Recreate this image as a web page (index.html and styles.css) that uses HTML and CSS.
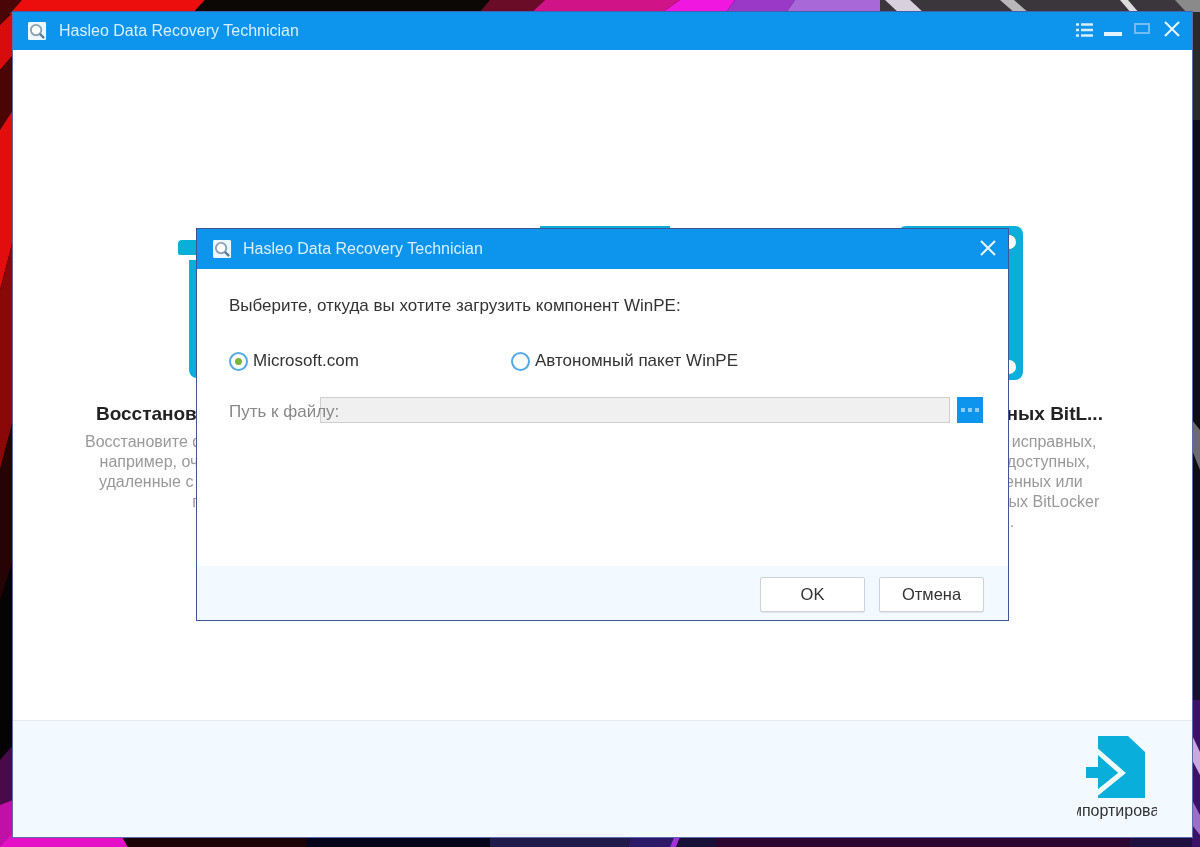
FILE: index.html
```html
<!DOCTYPE html>
<html lang="ru">
<head>
<meta charset="utf-8">
<title>Hasleo Data Recovery Technician</title>
<link rel="stylesheet" href="styles.css">
</head>
<body>
<svg class="wallpaper" viewBox="0 0 1200 847" preserveAspectRatio="none" aria-hidden="true">
  <rect width="1200" height="847" fill="#060304"/>
  <!-- top edge -->
  <polygon points="0,0 205,0 192,14 0,14" fill="#ec0d0d"/>
  <polygon points="0,0 22,0 0,25" fill="#4a0606"/>
  <polygon points="205,0 490,0 480,14 192,14" fill="#0c0805"/>
  <polygon points="490,0 545,0 530,14 478,14" fill="#6a0c28"/>
  <polygon points="545,0 680,0 660,14 530,14" fill="#d01488"/>
  <polygon points="680,0 735,0 725,14 660,14" fill="#f018e0"/>
  <polygon points="735,0 795,0 785,14 725,14" fill="#9a38c8"/>
  <polygon points="795,0 880,0 880,14 785,14" fill="#a868d8"/>
  <polygon points="880,0 1200,0 1200,14 880,14" fill="#3a363c"/>
  <polygon points="885,0 910,0 925,14 900,14" fill="#d8d0dc"/>
  <polygon points="1000,0 1014,0 1030,14 1016,14" fill="#b8b8b8"/>
  <polygon points="1120,0 1128,0 1140,14 1132,14" fill="#dddddd"/>
  <polygon points="1175,0 1200,0 1200,14 1188,14" fill="#8a8a8a"/>
  <!-- left edge -->
  <polygon points="0,25 13,12 13,55 0,70" fill="#d80c0c"/>
  <polygon points="0,70 13,55 13,110 0,130" fill="#4c0505"/>
  <polygon points="0,130 13,110 13,240 0,290" fill="#e20e0e"/>
  <polygon points="0,290 13,240 13,420 0,470" fill="#8a0808"/>
  <polygon points="0,470 13,420 13,560 0,600" fill="#260305"/>
  <polygon points="0,760 13,745 13,847 0,847" fill="#4a0a48"/>
  <polygon points="0,805 13,800 13,847 0,847" fill="#c010a8"/>
  <!-- bottom edge -->
  <polygon points="13,833 120,833 128,847 0,847" fill="#e60fc8"/>
  <polygon points="120,833 306,833 306,847 128,847" fill="#1c0306"/>
  <polygon points="306,833 490,833 490,847 306,847" fill="#05041a"/>
  <polygon points="490,833 632,833 628,847 490,847" fill="#201a4a"/>
  <polygon points="632,833 680,833 672,847 628,847" fill="#2c1a68"/>
  <polygon points="676,833 682,833 676,847 670,847" fill="#a030e0"/>
  <polygon points="682,833 716,833 716,847 676,847" fill="#181038"/>
  <polygon points="716,833 1130,833 1130,847 716,847" fill="#2c0530"/>
  <polygon points="1130,833 1200,833 1200,847 1130,847" fill="#201040"/>
  <!-- right edge -->
  <polygon points="1192,12 1200,12 1200,120 1192,120" fill="#2a2a2a"/>
  <polygon points="1192,120 1200,120 1200,560 1192,560" fill="#0e0e10"/>
  <polygon points="1192,420 1200,430 1200,470 1192,450" fill="#6a6a70"/>
  <polygon points="1192,560 1200,560 1200,700 1192,700" fill="#1a0f2c"/>
  <polygon points="1192,700 1200,700 1200,847 1192,847" fill="#3c1268"/>
  <polygon points="1192,735 1200,752 1200,775 1192,760" fill="#c9a9e0"/>
  <polygon points="1192,800 1200,815 1200,835 1192,825" fill="#9a70c8"/>
</svg>

<section class="window main-window">
  <header class="titlebar">
    <svg class="app-icon" viewBox="0 0 20 20" aria-hidden="true">
      <rect width="19" height="19" rx="1.5" fill="#eef7fd"/>
      <circle cx="8.5" cy="8.5" r="5.5" fill="#fff" stroke="#8ba3b3" stroke-width="2"/>
      <path d="M12.5 12.5 L17 17" stroke="#5f7c8f" stroke-width="2.4"/>
    </svg>
    <span class="title">Hasleo Data Recovery Technician</span>
    <div class="controls">
      <svg class="ctl ctl-menu" viewBox="0 0 17 14" aria-hidden="true">
        <path d="M0 1.5h3M5 1.5h12M0 7h3M5 7h12M0 12.5h3M5 12.5h12" stroke="#d5edfd" stroke-width="2.4"/>
      </svg>
      <svg class="ctl ctl-min" viewBox="0 0 18 14" aria-hidden="true">
        <path d="M0 10h18" stroke="#e3f3fe" stroke-width="4"/>
      </svg>
      <svg class="ctl ctl-max" viewBox="0 0 16 11" aria-hidden="true">
        <rect x="1" y="1" width="14" height="9" fill="none" stroke="#74bdf3" stroke-width="2"/>
      </svg>
      <svg class="ctl ctl-close" viewBox="0 0 16 16" aria-hidden="true">
        <path d="M1 1L15 15M15 1L1 15" stroke="#e9f5fe" stroke-width="2"/>
      </svg>
    </div>
  </header>

  <main class="features">
    <article class="feature">
      <div class="art-left">
        <div class="art-tab"></div>
        <div class="art-sheet"></div>
      </div>
      <h2>Восстановление фото</h2>
      <p>Восстановите файлы после сбоя,<br>например, очистив корзину<br>удаленные с&nbsp; дисков и карт<br>по</p>
    </article>
    <article class="feature">
      <div class="art-mid"></div>
    </article>
    <article class="feature">
      <div class="art-right">
        <span class="notch notch-top"></span>
        <span class="notch notch-bottom"></span>
      </div>
      <h2>Тома данных BitL...</h2>
      <p>Данные на исправных,<br>дисков недоступных,<br>поврежденных или<br>не удаленных BitLocker<br>.</p>
    </article>
  </main>

  <footer class="main-footer">
    <div class="import">
      <svg class="import-icon" viewBox="0 0 59 63" aria-hidden="true">
        <path d="M12 0H42L59 16V62H12Z" fill="#0aaedb"/>
        <path d="M10 14L36 37L10 58" fill="none" stroke="#f3fafe" stroke-width="5"/>
        <rect x="0" y="12" width="12" height="48" fill="#f3faff"/>
        <rect x="0" y="31" width="13" height="11" fill="#0aaedb"/>
      </svg>
      <span class="import-label"><span class="import-text">Импортировать</span></span>
    </div>
  </footer>
</section>

<section class="window dialog">
  <header class="titlebar dialog-bar">
    <svg class="app-icon" viewBox="0 0 20 20" aria-hidden="true">
      <rect width="19" height="19" rx="1.5" fill="#eef7fd"/>
      <circle cx="8.5" cy="8.5" r="5.5" fill="#fff" stroke="#8ba3b3" stroke-width="2"/>
      <path d="M12.5 12.5 L17 17" stroke="#5f7c8f" stroke-width="2.4"/>
    </svg>
    <span class="title">Hasleo Data Recovery Technician</span>
    <svg class="ctl dialog-close" viewBox="0 0 16 16" aria-hidden="true">
      <path d="M1 1L15 15M15 1L1 15" stroke="#e9f5fe" stroke-width="2"/>
    </svg>
  </header>
  <div class="dialog-body">
    <p class="prompt">Выберите, откуда вы хотите загрузить компонент WinPE:</p>
    <div class="radios">
      <label class="radio radio-ms"><span class="dot dot-on"></span>Microsoft.com</label>
      <label class="radio"><span class="dot"></span>Автономный пакет WinPE</label>
    </div>
    <div class="path-row">
      <span class="path-label">Путь к файлу:</span>
      <div class="path-input"></div>
      <div class="browse"><i></i><i></i><i></i></div>
    </div>
  </div>
  <footer class="dialog-footer">
    <button class="btn">OK</button>
    <button class="btn">Отмена</button>
  </footer>
</section>
</body>
</html>
```
FILE: styles.css
```css
* { box-sizing: border-box; }
html, body { margin: 0; height: 847px; overflow: hidden; }
body {
  position: relative;
  width: 1200px;
  font-family: "Liberation Sans", Arial, sans-serif;
  font-size: 16px;
  padding: 11px 7px 9px 12px;
}
.wallpaper { position: absolute; inset: 0; width: 1200px; height: 847px; }

.window { filter: blur(0.45px); }
.main-window {
  position: relative;
  height: 827px;
  background: #fff;
  border: 1px solid #5d6ba8;
  border-top-color: #3f62b0;
  display: flex;
  flex-direction: column;
}
.titlebar {
  display: flex;
  align-items: center;
  flex: none;
  height: 38px;
  background: #0d95ee;
  padding-left: 15px;
  color: #d9effd;
}
.app-icon { width: 19px; height: 19px; flex: none; }
.title { margin-left: 12px; font-size: 16px; }
.controls {
  margin-left: auto;
  display: flex;
  align-items: center;
  padding-right: 12px;
}
.ctl { display: block; flex: none; }
.ctl-menu { width: 17px; height: 14px; margin-right: 11px; margin-bottom: 2px; }
.ctl-min { width: 18px; height: 14px; margin-right: 12px; }
.ctl-max { width: 16px; height: 11px; margin-right: 14px; margin-bottom: 6px; }
.ctl-close { width: 16px; height: 16px; margin-bottom: 4px; }

.features {
  flex: 1;
  display: grid;
  grid-template-columns: 232px 232px 232px;
  justify-content: space-between;
  padding: 176px 64px 0 72px;
}
.feature { text-align: center; }
.feature h2 {
  margin: 0;
  font-size: 19px;
  line-height: 24px;
  font-weight: 700;
  color: #222;
  white-space: nowrap;
}
.feature p {
  margin: 6px 0 0;
  font-size: 16px;
  line-height: 20px;
  color: #999;
  white-space: nowrap;
}
.art-left { margin: 14px 0 24px 93px; }
.art-tab {
  width: 60px;
  height: 15px;
  background: #0aaedb;
  border-radius: 4px 0 0 2px;
}
.art-sheet {
  width: 120px;
  height: 118px;
  margin: 5px 0 0 11px;
  background: #0aaedb;
  border-radius: 0 0 0 8px;
}
.art-mid { width: 130px; height: 100px; margin: 0 0 0 49px; background: #0aaedb; }
.art-right {
  position: relative;
  width: 125px;
  height: 154px;
  margin: 0 0 22px 2px;
  background: #0aaedb;
  border-radius: 8px;
}
.notch {
  position: absolute;
  left: 104px;
  width: 14px;
  height: 14px;
  border-radius: 50%;
  background: #fff;
}
.notch-top { top: 9px; }
.notch-bottom { top: 134px; }

.main-footer {
  flex: none;
  height: 117px;
  background: #f3faff;
  border-top: 1px solid #e6e9ee;
  display: flex;
  justify-content: flex-end;
  padding: 15px 35px 0 0;
}
.import { width: 80px; display: flex; flex-direction: column; align-items: center; }
.import-icon { width: 59px; height: 63px; margin-left: -3px; }
.import-label {
  width: 80px;
  margin-top: 3px;
  overflow: hidden;
  display: flex;
  justify-content: center;
  line-height: 18px;
  font-size: 16px;
  color: #333;
}
.import-text { flex: none; }

.dialog {
  position: absolute;
  left: 196px;
  top: 228px;
  width: 813px;
  height: 393px;
  background: #fff;
  border: 1px solid #3f5596;
  display: flex;
  flex-direction: column;
}
.dialog-bar { height: 40px; padding-left: 16px; }
.dialog-bar .title { margin-left: 11px; }
.dialog-close { margin-left: auto; margin-right: 12px; width: 16px; height: 16px; margin-bottom: 2px; }
.dialog-body { flex: 1; padding: 27px 25px 0 32px; }
.prompt { margin: 0; font-size: 17px; line-height: 20px; color: #333; }
.radios { display: flex; margin-top: 34px; height: 22px; align-items: center; }
.radio { display: flex; align-items: center; font-size: 17px; color: #333; }
.radio-ms { width: 282px; }
.dot {
  width: 19px;
  height: 19px;
  margin-right: 5px;
  border-radius: 50%;
  border: 2px solid #55a9e4;
  background: #fff;
  flex: none;
  display: flex;
  align-items: center;
  justify-content: center;
}
.dot-on::after {
  content: "";
  width: 7px;
  height: 7px;
  border-radius: 50%;
  background: #7db53a;
}
.path-row { display: flex; align-items: center; margin-top: 25px; height: 26px; }
.path-label {
  width: 91px;
  flex: none;
  position: relative;
  z-index: 1;
  padding-top: 3px;
  color: #888;
  font-size: 17px;
  white-space: nowrap;
}
.path-input {
  width: 630px;
  height: 26px;
  flex: none;
  background: #f0f0f0;
  border: 1px solid #cfcfcf;
}
.browse {
  width: 26px;
  height: 26px;
  margin-left: 7px;
  flex: none;
  background: #0d95ee;
  display: flex;
  align-items: center;
  justify-content: center;
  gap: 3px;
}
.browse i { width: 4px; height: 4px; background: #8fcbf6; }
.dialog-footer {
  flex: none;
  height: 54px;
  background: #f3faff;
  display: flex;
  justify-content: flex-end;
  align-items: flex-start;
  gap: 14px;
  padding: 11px 24px 0 0;
}
.btn {
  width: 105px;
  height: 35px;
  background: #fff;
  border: 1px solid #cdd3da;
  border-radius: 2px;
  box-shadow: 0 1px 1px #dfe5ea;
  font-family: inherit;
  font-size: 16.5px;
  color: #333;
  padding: 0;
}
```
